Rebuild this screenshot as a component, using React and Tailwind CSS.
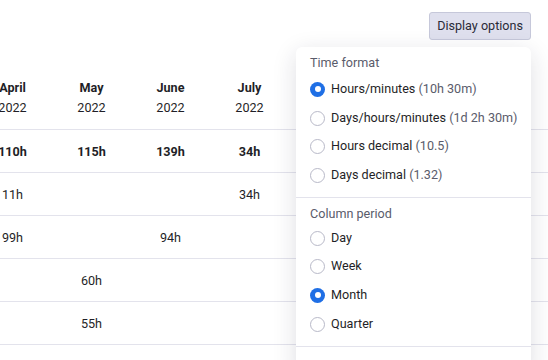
import React from "react";

const months = [
  { m: "April", total: "110h", rows: ["11h", "99h", "", ""] },
  { m: "May", total: "115h", rows: ["", "", "60h", "55h"] },
  { m: "June", total: "139h", rows: ["", "94h", "", ""] },
  { m: "July", total: "34h", rows: ["34h", "", "", ""] },
];

function Radio({ checked }) {
  return checked ? (
    <span className="w-[15px] h-[15px] rounded-full bg-[#1f6fe5] flex items-center justify-center shrink-0">
      <span className="w-[6px] h-[6px] rounded-full bg-white" />
    </span>
  ) : (
    <span className="w-[15px] h-[15px] rounded-full border border-[#b8b9c8] bg-white shrink-0" />
  );
}

function Option({ label, hint, checked }) {
  return (
    <div className="flex items-center h-[28.7px] gap-[6px] whitespace-nowrap">
      <Radio checked={checked} />
      <span className="text-[12.6px] text-[#1f1f27]">
        {label}
        {hint && <span className="text-[#5a5c6b]"> {hint}</span>}
      </span>
    </div>
  );
}

export default function App() {
  const rowIdx = [0, 1, 2, 3];
  return (
    <div
      className="relative w-[548px] h-[360px] overflow-hidden bg-white"
      style={{ fontFamily: "Roboto, 'Liberation Sans', sans-serif" }}
    >
      <div className="flex justify-end pt-[12px] pr-[17px]">
        <button className="h-[28px] px-[7px] rounded-[3px] border border-[#c6c8da] bg-[#dfe0ee] text-[12.6px] text-[#2a2b38] whitespace-nowrap">
          Display options
        </button>
      </div>

      <div className="ml-[-27px] mt-[34px] flex flex-col text-[12.6px] text-[#1f1f27]">
        <div className="flex h-[56px] border-b border-[#e3e3ec]">
          {months.map((c) => (
            <div key={c.m} className="w-[79px] shrink-0 flex flex-col items-center pt-[4px] leading-[20px]">
              <span className="font-bold">{c.m}</span>
              <span>2022</span>
            </div>
          ))}
        </div>
        <div className="flex h-[43px] border-b border-[#e3e3ec] items-center pt-[2px]">
          {months.map((c) => (
            <div key={c.m} className="w-[79px] shrink-0 text-center font-bold">
              {c.total}
            </div>
          ))}
        </div>
        {rowIdx.map((r) => (
          <div key={r} className="flex h-[43px] border-b border-[#e3e3ec] items-center pt-[2px]">
            {months.map((c) => (
              <div key={c.m} className="w-[79px] shrink-0 text-center">
                {c.rows[r]}
              </div>
            ))}
          </div>
        ))}
      </div>

      <div className="absolute left-[296px] top-[47px] w-[235px] h-[330px] bg-white rounded-[6px] shadow-[0_6px_24px_rgba(30,30,60,0.14)]">
        <div className="px-[14px] pt-[6px] pb-[7px] border-b border-[#e3e3ec]">
          <div className="text-[12.6px] text-[#5a5c6b] h-[20px] leading-[20px] mb-[2px]">Time format</div>
          <Option label="Hours/minutes" hint="(10h 30m)" checked />
          <Option label="Days/hours/minutes" hint="(1d 2h 30m)" />
          <Option label="Hours decimal" hint="(10.5)" />
          <Option label="Days decimal" hint="(1.32)" />
        </div>
        <div className="px-[14px] pt-[6px] pb-[7px] border-b border-[#e3e3ec]">
          <div className="text-[12.6px] text-[#5a5c6b] h-[20px] leading-[20px]">Column period</div>
          <Option label="Day" />
          <Option label="Week" />
          <Option label="Month" checked />
          <Option label="Quarter" />
        </div>
      </div>
    </div>
  );
}
